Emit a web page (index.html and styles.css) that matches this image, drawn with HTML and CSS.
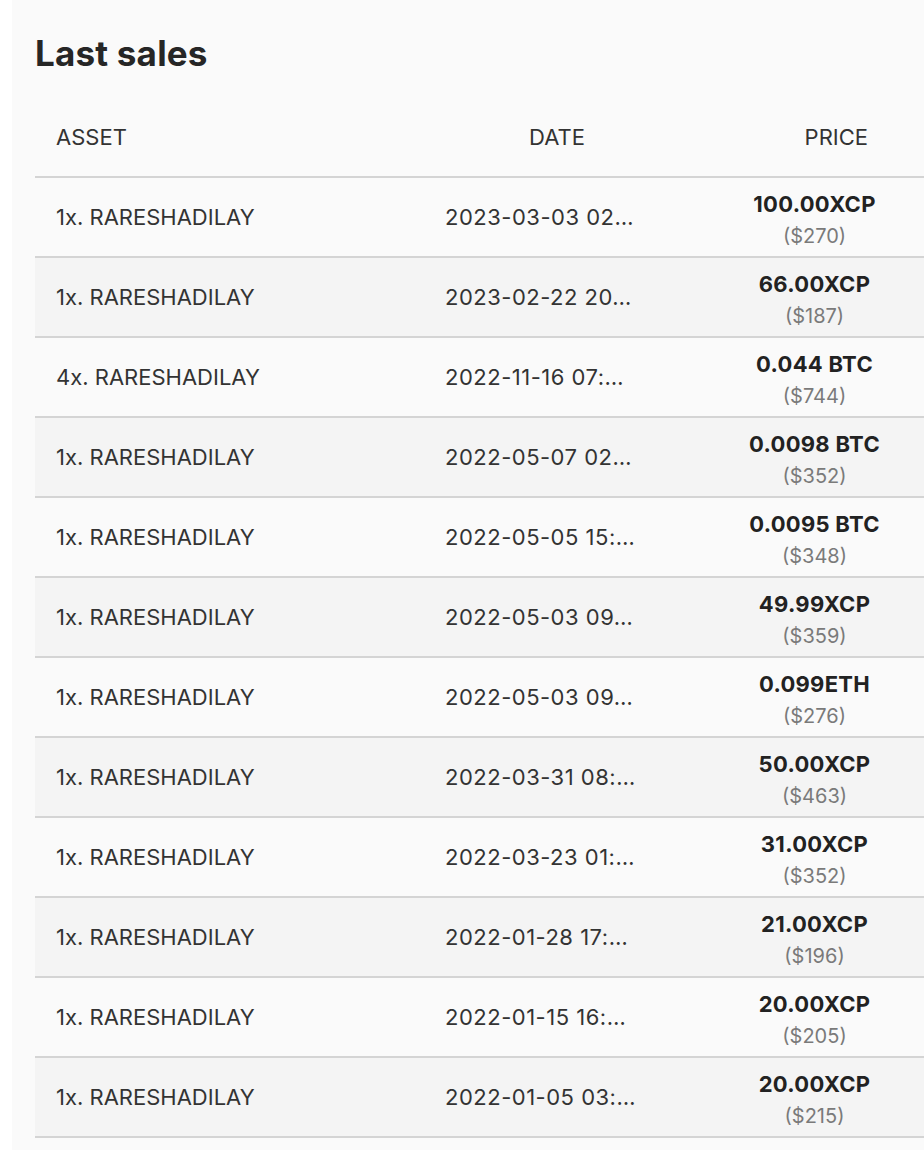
FILE: index.html
```html
<!DOCTYPE html>
<html>
<head>
<meta charset="utf-8">
<link rel="stylesheet" href="styles.css">
</head>
<body>
<div class="page">
  <section class="panel">
    <h1 class="title">Last sales</h1>
    <div class="table">
      <div class="row head">
        <div class="h-asset">ASSET</div>
        <div class="h-date">DATE</div>
        <div class="h-price">PRICE</div>
      </div>
      <div class="row"><div class="c-asset">1x. RARESHADILAY</div><div class="c-date"><span>2023-03-03 02…</span></div><div class="c-price"><b>100.00XCP</b><small>($270)</small></div></div>
      <div class="row alt"><div class="c-asset">1x. RARESHADILAY</div><div class="c-date"><span>2023-02-22 20…</span></div><div class="c-price"><b>66.00XCP</b><small>($187)</small></div></div>
      <div class="row"><div class="c-asset">4x. RARESHADILAY</div><div class="c-date"><span>2022-11-16 07:…</span></div><div class="c-price"><b>0.044 BTC</b><small>($744)</small></div></div>
      <div class="row alt"><div class="c-asset">1x. RARESHADILAY</div><div class="c-date"><span>2022-05-07 02…</span></div><div class="c-price"><b>0.0098 BTC</b><small>($352)</small></div></div>
      <div class="row"><div class="c-asset">1x. RARESHADILAY</div><div class="c-date"><span>2022-05-05 15:…</span></div><div class="c-price"><b>0.0095 BTC</b><small>($348)</small></div></div>
      <div class="row alt"><div class="c-asset">1x. RARESHADILAY</div><div class="c-date"><span>2022-05-03 09…</span></div><div class="c-price"><b>49.99XCP</b><small>($359)</small></div></div>
      <div class="row"><div class="c-asset">1x. RARESHADILAY</div><div class="c-date"><span>2022-05-03 09…</span></div><div class="c-price"><b>0.099ETH</b><small>($276)</small></div></div>
      <div class="row alt"><div class="c-asset">1x. RARESHADILAY</div><div class="c-date"><span>2022-03-31 08:…</span></div><div class="c-price"><b>50.00XCP</b><small>($463)</small></div></div>
      <div class="row"><div class="c-asset">1x. RARESHADILAY</div><div class="c-date"><span>2022-03-23 01:…</span></div><div class="c-price"><b>31.00XCP</b><small>($352)</small></div></div>
      <div class="row alt"><div class="c-asset">1x. RARESHADILAY</div><div class="c-date"><span>2022-01-28 17:…</span></div><div class="c-price"><b>21.00XCP</b><small>($196)</small></div></div>
      <div class="row"><div class="c-asset">1x. RARESHADILAY</div><div class="c-date"><span>2022-01-15 16:…</span></div><div class="c-price"><b>20.00XCP</b><small>($205)</small></div></div>
      <div class="row alt"><div class="c-asset">1x. RARESHADILAY</div><div class="c-date"><span>2022-01-05 03:…</span></div><div class="c-price"><b>20.00XCP</b><small>($215)</small></div></div>
    </div>
  </section>
</div>
</body>
</html>
```

FILE: styles.css
```css
html, body {
  margin: 0;
  padding: 0;
  background: #ffffff;
}
body {
  font-family: "Inter", "Roboto", sans-serif;
  color: #2b2b2b;
  overflow: hidden;
}
.page {
  padding-left: 12px;
  min-height: 1150px;
}
.panel {
  background: #fafafa;
  min-height: 1150px;
  padding: 30px 0 0 23px;
  box-sizing: border-box;
}
.title {
  margin: 0;
  font-size: 35px;
  line-height: 46px;
  font-weight: 700;
  color: #262626;
  letter-spacing: 0.2px;
}
.table {
  margin-top: 19px;
}
.row {
  display: grid;
  grid-template-columns: 374px 296px 219px;
  height: 80px;
  align-items: center;
  border-bottom: 2px solid #d4d4d4;
  box-sizing: border-box;
  font-size: 22px;
  font-weight: 400;
  color: #333333;
}
.row.head {
  height: 83px;
  padding-top: 2px;
}
.row.alt {
  background: #f4f4f4;
}
.h-asset,
.c-asset {
  padding-left: 21px;
}
.h-date {
  text-align: center;
}
.h-price {
  text-align: right;
  padding-right: 56px;
}
.c-date {
  padding-left: 36px;
  white-space: nowrap;
  letter-spacing: 0.5px;
}
.c-price {
  display: flex;
  flex-direction: column;
  align-items: center;
  gap: 6px;
  padding-top: 4px;
}
.c-price b {
  font-weight: 700;
  font-size: 22px;
  line-height: 28px;
  color: #222;
  letter-spacing: 0.3px;
}
.c-price small {
  font-size: 20px;
  line-height: 24px;
  color: #7a7a7a;
}
```
